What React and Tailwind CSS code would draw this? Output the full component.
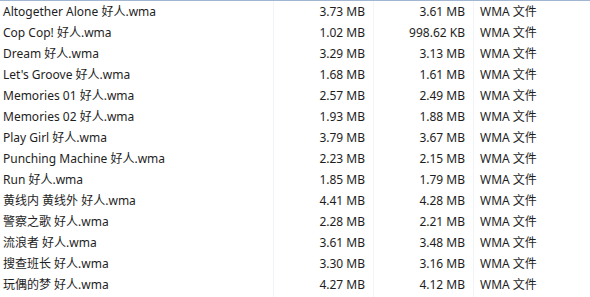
import React from "react";

const files = [
  ["Altogether Alone 好人.wma", "3.73 MB", "3.61 MB"],
  ["Cop Cop! 好人.wma", "1.02 MB", "998.62 KB"],
  ["Dream 好人.wma", "3.29 MB", "3.13 MB"],
  ["Let's Groove 好人.wma", "1.68 MB", "1.61 MB"],
  ["Memories 01 好人.wma", "2.57 MB", "2.49 MB"],
  ["Memories 02 好人.wma", "1.93 MB", "1.88 MB"],
  ["Play Girl 好人.wma", "3.79 MB", "3.67 MB"],
  ["Punching Machine 好人.wma", "2.23 MB", "2.15 MB"],
  ["Run 好人.wma", "1.85 MB", "1.79 MB"],
  ["黄线内 黄线外 好人.wma", "4.41 MB", "4.28 MB"],
  ["警察之歌 好人.wma", "2.28 MB", "2.21 MB"],
  ["流浪者 好人.wma", "3.61 MB", "3.48 MB"],
  ["搜查班长 好人.wma", "3.30 MB", "3.16 MB"],
  ["玩偶的梦 好人.wma", "4.27 MB", "4.12 MB"],
];

function App() {
  return (
    <div
      className="w-[590px] h-[297px] bg-white border-t border-[#a3b6d1] overflow-hidden text-[12px] text-[#1e1e1e]"
      style={{ fontFamily: '"Noto Sans", "Noto Sans CJK SC", sans-serif' }}
    >
      <div className="flex h-full">
        <div className="w-[274px] border-r border-[#f1f4f8]">
          {files.map((f) => (
            <div key={f[0]} className="h-[21px] flex items-center pl-[3px] whitespace-nowrap">
              {f[0]}
            </div>
          ))}
        </div>
        <div className="w-[100px] border-r border-[#f1f4f8]">
          {files.map((f) => (
            <div key={f[0]} className="h-[21px] flex items-center justify-end pr-[8px]">
              {f[1]}
            </div>
          ))}
        </div>
        <div className="w-[100px] border-r border-[#f1f4f8]">
          {files.map((f) => (
            <div key={f[0]} className="h-[21px] flex items-center justify-end pr-[8px]">
              {f[2]}
            </div>
          ))}
        </div>
        <div className="flex-1">
          {files.map((f) => (
            <div key={f[0]} className="h-[21px] flex items-center pl-[6px]">
              WMA 文件
            </div>
          ))}
        </div>
      </div>
    </div>
  );
}

export default App;
